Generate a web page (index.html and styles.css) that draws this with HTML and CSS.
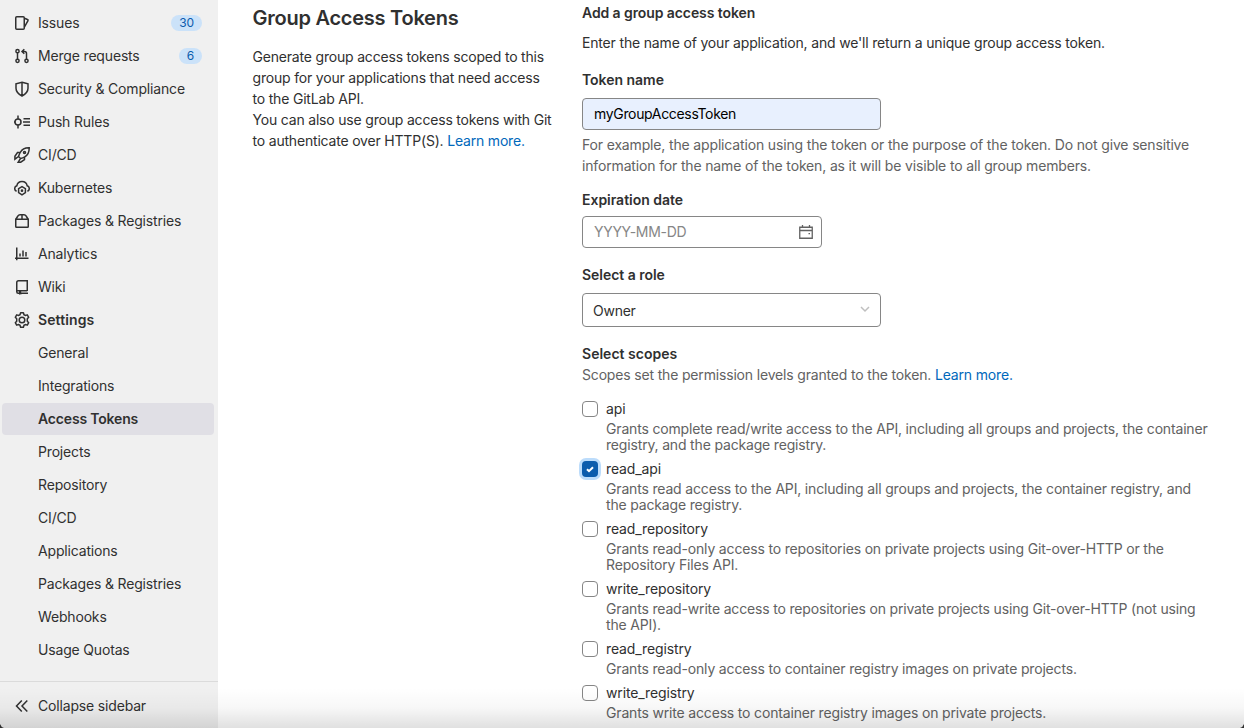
FILE: index.html
```html
<!DOCTYPE html>
<html lang="en">
<head>
<meta charset="utf-8">
<title>Group Access Tokens</title>
<link rel="stylesheet" href="styles.css">
</head>
<body>
<div class="page">
  <aside class="sidebar">
    <nav class="nav">
      <a class="item"><svg class="icon" viewBox="0 0 16 16"><rect x="1.750" y="1.750" width="8.500" height="12.500" rx="1"/><path d="M10.500 3.200l3 1.300c.5.200.7.700.5 1.200L10.500 11.800"/></svg><span>Issues</span><b class="badge">30</b></a>
      <a class="item"><svg class="icon" viewBox="0 0 16 16"><circle cx="3.500" cy="3.200" r="1.600"/><circle cx="3.500" cy="12.800" r="1.600"/><circle cx="12.500" cy="12.800" r="1.600"/><path d="M3.500 5v6M12.500 11V5.500a2 2 0 0 0-2-2H8.500M10.300 1.200L8 3.500l2.300 2.300"/></svg><span>Merge requests</span><b class="badge">6</b></a>
      <a class="item"><svg class="icon" viewBox="0 0 16 16"><path d="M8 1.200l6 1.700v4.300c0 3.500-2.600 6-6 7.800-3.400-1.800-6-4.300-6-7.800V2.900zM8 1.200V15"/></svg><span>Security &amp; Compliance</span></a>
      <a class="item"><svg class="icon" viewBox="0 0 16 16"><circle cx="4" cy="8" r="3"/><path d="M4 1.500V5M4 11v3.500M0 8h1M9 8h7M9.500 4.700H16M9.500 11.300H16"/></svg><span>Push Rules</span></a>
      <a class="item"><svg class="icon" viewBox="0 0 16 16"><path d="M15.200.8c-4.500-.1-7.300 1.600-9 4.700-.9 1.600-1.400 3-1.700 4l2 2c1.400-.3 2.800-.8 4.300-1.700 3-1.800 4.500-4.600 4.400-9zM6 5.500H3.500L.9 9.300v2.900l3.600-2.700M10.500 10v2.500l-3.800 2.700H4.200l2.300-3.700"/><circle cx="10.500" cy="5.500" r="1"/></svg><span>CI/CD</span></a>
      <a class="item"><svg class="icon" viewBox="0 0 16 16"><path d="M2.600 11.300A2.900 2.900 0 0 1 2.800 5.800 5.300 5.300 0 0 1 13.200 5.800 2.900 2.900 0 0 1 13.400 11.300M8 6.700l3.400 2v4L8 14.800l-3.400-2.100v-4z"/><circle cx="8" cy="10.700" r=".6"/></svg><span>Kubernetes</span></a>
      <a class="item"><svg class="icon" viewBox="0 0 16 16"><path d="M1.750 6.200h12.500v7.300a.75.75 0 0 1-.75.75h-11a.75.75 0 0 1-.75-.75zM2 6l1.900-3A2.500 2.500 0 0 1 6 1.750h4A2.500 2.500 0 0 1 12.100 3L14 6M8 1.750V6"/></svg><span>Packages &amp; Registries</span></a>
      <a class="item"><svg class="icon" viewBox="0 0 16 16"><path d="M2.750 1.500v12.700M1 12.250h13.500M6 7.500v3M9 4.500v6M12 6v4.500"/></svg><span>Analytics</span></a>
      <a class="item"><svg class="icon" viewBox="0 0 16 16"><path d="M13.250 12V1.750H4.500A1.750 1.750 0 0 0 2.750 3.500V12.800c0 .9.600 1.450 1.500 1.450h1M3 11.750h10.250M7 14.250h7"/><path class="solid" d="M5 12h2.200v4L6.100 15 5 16z"/></svg><span>Wiki</span></a>
      <a class="item bold current"><svg class="icon" viewBox="0 0 16 16"><path stroke-linejoin="round" d="M6.600.75h2.800l.6 2 1.300.7 2-.6 1.400 2.500-1.400 1.500v2.300l1.400 1.500-1.400 2.500-2-.6-1.300.7-.6 2H6.600l-.6-2-1.300-.7-2 .6-1.400-2.500 1.400-1.500v-2.300L1.300 5.350l1.400-2.500 2 .6 1.300-.7z"/><circle cx="8" cy="8" r="2.800"/></svg><span>Settings</span></a>
      <a class="item sub"><span>General</span></a>
      <a class="item sub"><span>Integrations</span></a>
      <a class="item sub bold active"><span>Access Tokens</span></a>
      <a class="item sub"><span>Projects</span></a>
      <a class="item sub"><span>Repository</span></a>
      <a class="item sub"><span>CI/CD</span></a>
      <a class="item sub"><span>Applications</span></a>
      <a class="item sub"><span>Packages &amp; Registries</span></a>
      <a class="item sub"><span>Webhooks</span></a>
      <a class="item sub"><span>Usage Quotas</span></a>
    </nav>
    <div class="collapse"><svg class="icon" viewBox="0 0 16 16"><path d="M7.800 2.500L2.500 8l5.300 5.500M13.300 2.500L8 8l5.300 5.500"/></svg><span>Collapse sidebar</span></div>
  </aside>
  <main class="main">
    <section class="intro">
      <h1>Group Access Tokens</h1>
      <p>Generate group access tokens scoped to this<br>group for your applications that need access<br>to the GitLab API.<br>You can also use group access tokens with Git<br>to authenticate over HTTP(S). <a class="link">Learn more.</a></p>
    </section>
    <section class="form">
      <h2>Add a group access token</h2>
      <p class="lead">Enter the name of your application, and we'll return a unique group access token.</p>
      <div class="label">Token name</div>
      <div class="field filled">myGroupAccessToken</div>
      <p class="help">For example, the application using the token or the purpose of the token. Do not give sensitive<br>information for the name of the token, as it will be visible to all group members.</p>
      <div class="label expiry">Expiration date</div>
      <div class="field date"><span>YYYY-MM-DD</span><svg class="icon cal" viewBox="0 0 16 16"><path d="M1.750 3.250h12.500v11H1.750zM1.750 6.500h12.500M4.500 1v2.500M11.500 1v2.500"/><path d="M10.500 9.700h1.500"/></svg></div>
      <div class="label">Select a role</div>
      <div class="field select"><span>Owner</span><svg class="chevron" viewBox="0 0 16 16"><path d="M4 6l4 4 4-4"/></svg></div>
      <div class="label scopes">Select scopes</div>
      <p class="sethelp">Scopes set the permission levels granted to the token. <a class="link">Learn more.</a></p>
      <div class="scope"><i class="box"></i><div><div class="name">api</div><p>Grants complete read/write access to the API, including all groups and projects, the container<br>registry, and the package registry.</p></div></div>
      <div class="scope"><i class="box checked"><svg viewBox="0 0 16 16"><path d="M5 8.200l2 2 4-4"/></svg></i><div><div class="name">read_api</div><p>Grants read access to the API, including all groups and projects, the container registry, and<br>the package registry.</p></div></div>
      <div class="scope"><i class="box"></i><div><div class="name">read_repository</div><p>Grants read-only access to repositories on private projects using Git-over-HTTP or the<br>Repository Files API.</p></div></div>
      <div class="scope"><i class="box"></i><div><div class="name">write_repository</div><p>Grants read-write access to repositories on private projects using Git-over-HTTP (not using<br>the API).</p></div></div>
      <div class="scope"><i class="box"></i><div><div class="name">read_registry</div><p>Grants read-only access to container registry images on private projects.</p></div></div>
      <div class="scope"><i class="box"></i><div><div class="name">write_registry</div><p>Grants write access to container registry images on private projects.</p></div></div>
    </section>
  </main>
  <div class="shade"></div>
  <svg class="corner left" viewBox="0 0 4 4"><path d="M0 0v4h4Q1 3 0 0z"/></svg>
  <svg class="corner right" viewBox="0 0 4 4"><path d="M4 0v4H0Q3 3 4 0z"/></svg>
</div>
</body>
</html>
```
FILE: styles.css
```css
* { box-sizing: border-box; }
body { margin: 0; font-family: Inter, "Liberation Sans", sans-serif; font-size: 14px; line-height: 20px; letter-spacing: -0.17px; color: #303030; background: #fff; }
p, h1, h2 { margin: 0; }
.page { position: relative; display: flex; height: 728px; overflow: hidden; }
.sidebar { width: 218px; flex: none; background: #f0f0f0; display: flex; flex-direction: column; justify-content: space-between; }
.nav { display: flex; flex-direction: column; gap: 1px; padding: 7px 4px 0 2px; }
.item { display: flex; align-items: center; height: 32px; padding: 0 12px; border-radius: 4px; }
.sub { padding-left: 36px; }
.bold { font-weight: 600; }
.current { letter-spacing: 0.1px; }
.active { background: #e0dfe5; }
.icon { width: 16px; height: 16px; margin-right: 8px; flex: none; fill: none; stroke: #303030; stroke-width: 1.5; }
.solid { fill: #303030; stroke: none; }
.badge { margin-left: auto; height: 16px; line-height: 16px; padding: 0 8px; border-radius: 8px; background: #cbe2f9; color: #0b5cad; font-size: 12px; font-weight: 400; letter-spacing: -0.1px; }
.collapse { height: 47px; border-top: 1px solid #dbdbdb; display: flex; align-items: center; padding: 2px 14px 0; }
.main { display: flex; flex: 1; }
.intro { width: 330px; margin-left: 34.500px; flex: none; }
.intro h1 { font-size: 20px; line-height: 24px; font-weight: 600; letter-spacing: -0.25px; margin: 6px 0 16px; }
.intro p { line-height: 21px; letter-spacing: -0.19px; }
.link { color: #0068bb; }
.form { width: 640px; flex: none; margin-left: -.5px; padding-top: 3px; }
.form h2 { font-size: 14px; line-height: 20px; font-weight: 600; letter-spacing: -0.09px; }
.lead { margin-top: 10px; }
.label { font-weight: 600; margin-top: 17px; letter-spacing: -0.03px; }
.field { width: 299px; height: 32px; margin-top: 8px; border: 1px solid #868686; border-radius: 4px; padding: 0 11px; display: flex; align-items: center; justify-content: space-between; }
.filled { background: #e8f0fe; color: #000; letter-spacing: -0.33px; }
.help { margin-top: 4px; line-height: 21px; color: #626262; letter-spacing: -0.155px; }
.label.expiry { margin-top: 14px; }
.date { width: 240px; margin-top: 6px; color: #868686; padding-right: 7px; letter-spacing: -0.3px; }
.cal { margin: 0; stroke: #626262; stroke-width: 1.3; }
.select { height: 34px; padding: 1px 7px 0 10px; }
.select span { padding-top: 1px; letter-spacing: -0.25px; }
.chevron { width: 16px; height: 16px; margin-top: -4px; fill: none; stroke: #bfbfbf; stroke-width: 1.5; }
.label.scopes { letter-spacing: 0.02px; }
.sethelp { line-height: 22px; color: #626262; margin-bottom: 13px; }
.scope { display: flex; gap: 8px; margin-bottom: 6px; }
.box { width: 16px; height: 16px; margin-top: 2px; flex: none; border: 1px solid #868686; border-radius: 4px; }
.checked { background: #0b5cad; border: 0; box-shadow: 0 0 0 3px #bcdcfb; }
.checked svg { display: block; width: 16px; height: 16px; fill: none; stroke: #fff; stroke-width: 2; }
.name { letter-spacing: -0.12px; }
.scope p { margin-top: 2px; line-height: 16px; color: #626262; }
.shade { position: absolute; left: 0; right: 0; bottom: 0; height: 40px; background: linear-gradient(transparent, rgba(0,0,0,.03) 50%, rgba(0,0,0,.12)); }
.corner { position: absolute; bottom: 0; width: 4px; height: 4px; fill: #303030; }
.left { left: 0; }
.right { right: 0; }
```
